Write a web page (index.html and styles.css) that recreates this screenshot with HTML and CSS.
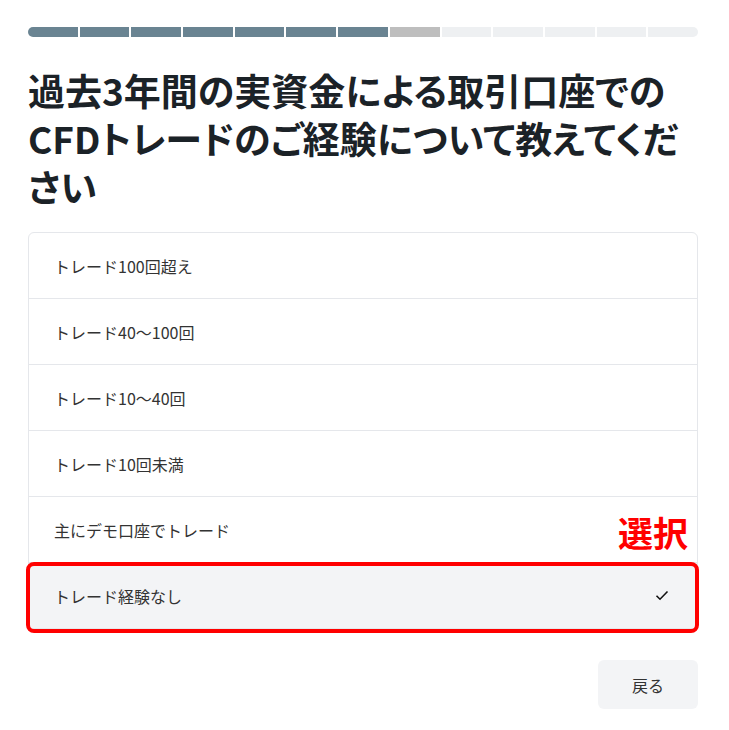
FILE: index.html
```html
<!DOCTYPE html>
<html lang="ja">
<head>
<meta charset="utf-8">
<title>CFD経験</title>
<link rel="stylesheet" href="styles.css">
</head>
<body>
<div class="page">
  <div class="progress">
    <span class="seg done"></span><span class="seg done"></span><span class="seg done"></span><span class="seg done"></span><span class="seg done"></span><span class="seg done"></span><span class="seg done"></span><span class="seg current"></span><span class="seg"></span><span class="seg"></span><span class="seg"></span><span class="seg"></span><span class="seg"></span>
  </div>
  <h1 class="title">過去3年間の実資金による取引口座でのCFDトレードのご経験について教えてください</h1>
  <div class="options-wrap">
    <ul class="options">
      <li class="option">トレード100回超え</li>
      <li class="option">トレード40〜100回</li>
      <li class="option">トレード10〜40回</li>
      <li class="option">トレード10回未満</li>
      <li class="option">主にデモ口座でトレード</li>
      <li class="option selected">トレード経験なし
        <svg class="check" width="14" height="11" viewBox="0 0 14 11"><path d="M1.5 5.8 L5 9.2 L12.5 1.5" fill="none" stroke="#111" stroke-width="1.6"/></svg>
      </li>
    </ul>
    <div class="mark-label">選択</div>
    <div class="mark-box"></div>
  </div>
  <div class="actions">
    <button class="back">戻る</button>
  </div>
</div>
</body>
</html>
```
FILE: styles.css
```css
html, body {
  margin: 0;
  padding: 0;
  background: #ffffff;
}
body {
  font-family: "Noto Sans CJK JP", "Noto Sans", sans-serif;
  color: #333;
}
.page {
  width: 670px;
  padding: 27px 0 0 28px;
}
.progress {
  display: flex;
  gap: 2px;
  height: 10px;
  border-radius: 5px;
  overflow: hidden;
}
.seg {
  flex: 1;
  background: #eef0f2;
}
.seg.done { background: #6a8492; }
.seg.current { background: #bebebe; }
.title {
  margin: 29px 0 22px;
  font-size: 37px;
  line-height: 48px;
  font-weight: 700;
  color: #1b2227;
  font-feature-settings: "palt";
}
.options-wrap {
  position: relative;
}
.options {
  list-style: none;
  margin: 0;
  padding: 0;
  border: 1px solid #e5e7eb;
  border-radius: 6px;
  overflow: hidden;
}
.option {
  height: 65px;
  display: flex;
  align-items: center;
  justify-content: space-between;
  padding: 0 28px 0 25px;
  font-size: 16px;
  color: #333;
  border-top: 1px solid #e5e7eb;
}
.option:first-child { border-top: none; }
.option.selected {
  background: #f3f4f6;
}
.check { margin-top: 0; }
.mark-label {
  position: absolute;
  right: 10px;
  top: 280px;
  font-size: 35px;
  line-height: 40px;
  font-weight: 700;
  color: #ff0000;
}
.mark-box {
  position: absolute;
  left: -2px;
  right: -1px;
  top: 330px;
  height: 63px;
  border: 4px solid #ff0000;
  border-radius: 8px;
}
.actions {
  display: flex;
  justify-content: flex-end;
  margin-top: 31px;
}
.back {
  width: 100px;
  height: 49px;
  border: none;
  border-radius: 6px;
  background: #f3f4f6;
  font-family: "Noto Sans CJK JP", sans-serif;
  font-size: 16px;
  color: #333;
}
```
